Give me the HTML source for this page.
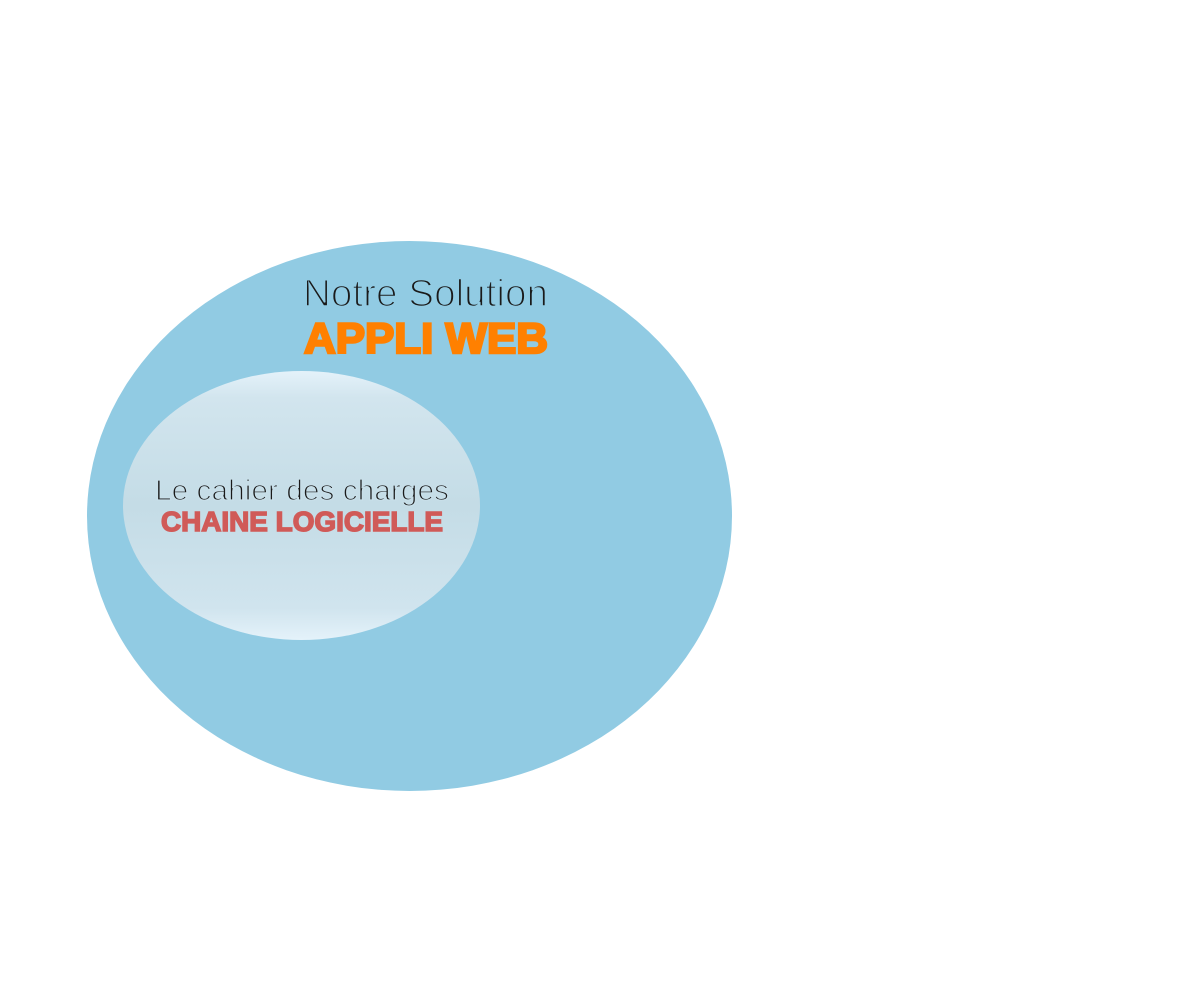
<!DOCTYPE html>
<html><head><meta charset="utf-8"><style>html,body{margin:0;padding:0;background:#fff;width:1200px;height:1000px;overflow:hidden}</style></head>
<body>
<svg width="1200" height="1000" viewBox="0 0 1200 1000" xmlns="http://www.w3.org/2000/svg">
<defs>
<linearGradient id="g" x1="0" y1="0" x2="0" y2="1">
<stop offset="0" stop-color="#e4f2fa"/>
<stop offset="0.1" stop-color="#d2e5ee"/>
<stop offset="0.5" stop-color="#c4dce6"/>
<stop offset="0.88" stop-color="#d0e4ee"/>
<stop offset="1" stop-color="#e4f2fa"/>
</linearGradient>
</defs>
<ellipse cx="409.5" cy="516" rx="322.5" ry="275" fill="#91cbe3"/>
<ellipse cx="301.5" cy="505.5" rx="178.5" ry="134.5" fill="url(#g)"/>
<text x="303" y="306" font-family="Liberation Sans, sans-serif" font-size="38" fill="#1a1a1a" textLength="245" lengthAdjust="spacingAndGlyphs" stroke="#91cbe3" stroke-width="1.6" paint-order="normal">Notre Solution</text>
<text x="304" y="353" font-family="Liberation Sans, sans-serif" font-size="43" font-weight="bold" fill="#ff8000" stroke="#ff8000" stroke-width="2.5" textLength="244" lengthAdjust="spacingAndGlyphs">APPLI WEB</text>
<text x="155" y="500" font-family="Liberation Sans, sans-serif" font-size="29" fill="#1a1a1a" stroke="#c8dfe9" stroke-width="1.3" textLength="294" lengthAdjust="spacingAndGlyphs">Le cahier des charges</text>
<text x="161" y="531" font-family="Liberation Sans, sans-serif" font-size="28" font-weight="bold" fill="#d05a58" stroke="#d05a58" stroke-width="1.5" textLength="282" lengthAdjust="spacingAndGlyphs">CHAINE LOGICIELLE</text>
</svg>
</body></html>
